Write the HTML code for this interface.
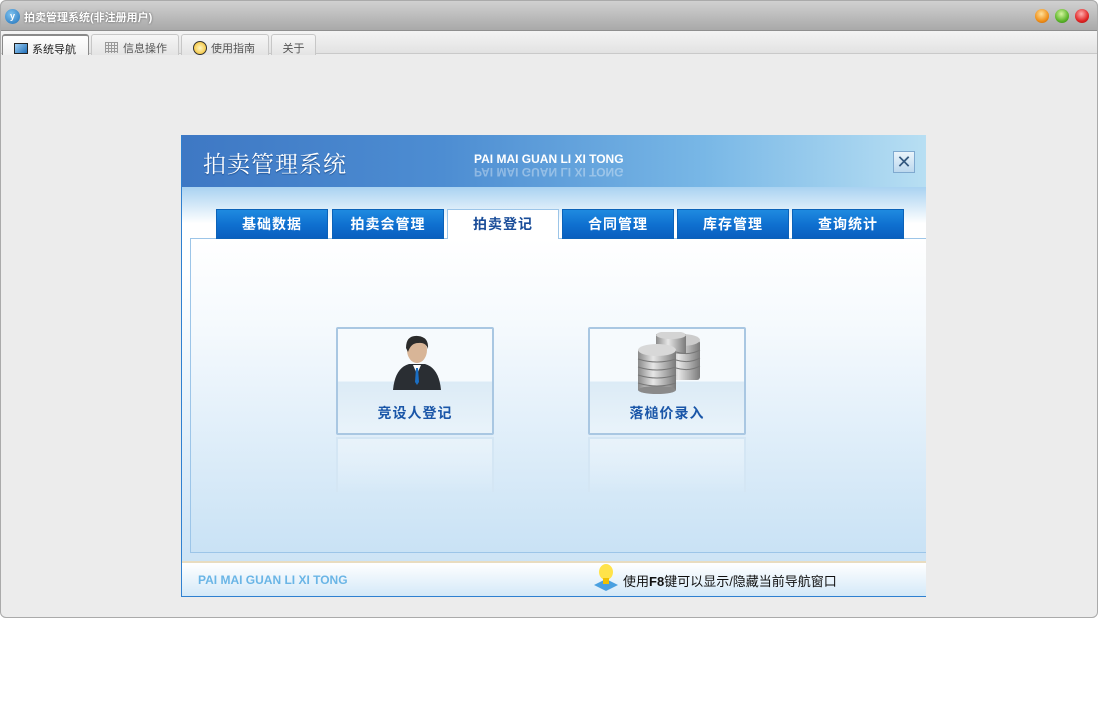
<!DOCTYPE html>
<html><head><meta charset="utf-8"><style>
*{margin:0;padding:0;box-sizing:border-box}
body{width:1098px;height:712px;background:#fff;font-family:"Liberation Sans","Noto Sans CJK SC",sans-serif;position:relative;overflow:hidden}
.win{position:absolute;left:0;top:0;width:1098px;height:618px;background:#ececec;border-radius:6px;overflow:hidden}
.wb{position:absolute;left:0;top:0;width:1098px;height:618px;border:1px solid #aaa;border-radius:6px;z-index:5}
.title{position:absolute;left:0;top:0;width:100%;height:31px;background:linear-gradient(#d2d2d2,#a9a9a9);border-bottom:1px solid #8f8f8f}
.title span{position:absolute;left:24px;top:9px;color:#fff;font-size:11px;font-weight:bold;text-shadow:0 0 2px #555}
.dot{position:absolute;top:9px;width:14px;height:14px;border-radius:50%}
.tabs{position:absolute;left:0;top:31px;width:100%;height:23px;background:linear-gradient(#f4f4f4,#e2e2e2);border-bottom:1px solid #c9c9c9}
.t{position:absolute;top:3px;height:21px;border:1px solid #c7c7c7;border-bottom:none;border-radius:3px 3px 0 0;background:linear-gradient(#f6f6f6,#e4e4e4);font-size:11px;color:#555;padding:5px 0 0 0}
.panel{position:absolute;left:181px;top:135px;width:745px;height:462px;border-left:1px solid #2f80d0;border-bottom:1px solid #2f80d0;background:linear-gradient(#fff 0%,#fff 30%,#c7e0f4 100%);overflow:hidden}
.hdr{position:absolute;left:0;top:0;width:745px;height:52px;background:linear-gradient(90deg,#3e78c4 0%,#4d8dd2 35%,#78b7e6 70%,#b8dff3 100%)}
.band{position:absolute;left:0;top:52px;width:745px;height:52px;background:linear-gradient(#a9d2f1,#fff 70%)}
.bt{position:absolute;top:74px;width:112px;height:30px;background:linear-gradient(#1f8ae0,#0e6fcf 55%,#0a5fbf);border:1px solid #0b62b8;color:#fff;font-size:14px;font-weight:bold;text-align:center;line-height:29px;letter-spacing:1px}
.bt.a{background:#fff;color:#1a4d99;border-color:#9cc5e8;border-bottom:none;height:30px}
.box{position:absolute;left:8px;top:103px;width:737px;height:315px;border:1px solid #9cc5e8;border-right:none;background:linear-gradient(#fff 0%,#f4f9fd 30%,#c9e2f5 100%)}
.card{position:absolute;width:158px;height:108px;border:2px solid #a9c7e2;border-radius:2px;background:linear-gradient(#f6fafd 0%,#f6fafd 50%,#dcebf6 51%,#e9f3fa 100%);text-align:center}
.card .l{position:absolute;left:0;width:100%;top:74px;font-size:14px;font-weight:bold;color:#1a56a8;letter-spacing:1px}
.refl{position:absolute;width:158px;height:55px;border:2px solid #d4e6f4;border-bottom:none;background:linear-gradient(rgba(235,244,251,.8),rgba(200,225,244,0))}
.foot{position:absolute;left:0;top:426px;width:745px;height:35px;border-top:2px solid #e8dcc0;background:linear-gradient(#fff,#d4e9f8)}
</style></head><body>
<div class="win">
 <div class="title">
  <div style="position:absolute;left:5px;top:9px;width:15px;height:15px;border-radius:50%;background:radial-gradient(circle at 40% 35%,#7fc3f0,#1d6fb8);color:#fff;font-size:9px;font-weight:bold;text-align:center;line-height:15px">y</div>
  <span>拍卖管理系统(非注册用户)</span>
  <div class="dot" style="left:1035px;background:radial-gradient(circle at 45% 35%,#ffe19a,#f0901a 60%,#b85a00)"></div>
  <div class="dot" style="left:1055px;background:radial-gradient(circle at 45% 35%,#d6f5a0,#5cb52a 60%,#2f7a10)"></div>
  <div class="dot" style="left:1075px;background:radial-gradient(circle at 45% 35%,#ffb0b0,#e02525 60%,#9a0c0c)"></div>
 </div>
 <div class="tabs">
  <div class="t" style="left:2px;width:87px;background:linear-gradient(#fff,#f0f0f0);color:#222;border-color:#8a8a8a;border-width:2px 1px 0 1px"><span style="display:inline-block;width:14px;height:11px;border:1px solid #222;background:linear-gradient(135deg,#9fd0f5,#1f6eb8);vertical-align:-1px;margin:0 4px 0 11px"></span>系统导航</div>
  <div class="t" style="left:91px;width:88px"><span style="display:inline-block;width:13px;height:11px;background:repeating-linear-gradient(90deg,#999 0 1px,transparent 1px 3px),repeating-linear-gradient(#999 0 1px,transparent 1px 3px);vertical-align:-1px;margin:0 5px 0 13px"></span>信息操作</div>
  <div class="t" style="left:181px;width:88px"><span style="display:inline-block;width:14px;height:14px;border-radius:50%;border:1px solid #333;background:radial-gradient(#fff6c0,#f1b71c);vertical-align:-3px;margin:0 4px 0 11px"></span>使用指南</div>
  <div class="t" style="left:271px;width:45px;text-align:center">关于</div>
 </div>
 <div class="panel">
  <div class="hdr">
   <div style="position:absolute;left:21px;top:11px;color:#fff;font-family:'Noto Serif CJK SC',serif;font-size:23px;text-shadow:0 1px 1px #1d4f8f;letter-spacing:1px">拍卖管理系统</div>
   <div style="position:absolute;left:292px;top:17px;color:#fff;font-size:12px;font-weight:bold">PAI MAI GUAN LI XI TONG</div>
   <div style="position:absolute;left:292px;top:30px;color:rgba(255,255,255,.35);font-size:12px;font-weight:bold;transform:scaleY(-1)">PAI MAI GUAN LI XI TONG</div>
   <div style="position:absolute;left:711px;top:16px;width:22px;height:22px;border:1px solid #7fa9cf;background:linear-gradient(#eaf4fb,#bcd8ee);color:#34597f;font-size:18px;text-align:center;line-height:20px">✕</div>
  </div>
  <div class="band"></div>
  <div class="box"></div>
  <div class="bt" style="left:34px">基础数据</div>
  <div class="bt" style="left:150px">拍卖会管理</div>
  <div class="bt a" style="left:265px">拍卖登记</div>
  <div class="bt" style="left:380px">合同管理</div>
  <div class="bt" style="left:495px">库存管理</div>
  <div class="bt" style="left:610px">查询统计</div>
  <div class="card" style="left:154px;top:192px">
   <svg width="60" height="60" viewBox="0 0 60 60" style="position:absolute;left:49px;top:3px">
    <path d="M6 58 Q8 36 22 32 L38 32 Q52 36 54 58 Z" fill="#2a2e33"/>
    <path d="M26 33 L30 42 L34 33 Z" fill="#fff"/>
    <path d="M29 36 L31 36 L32 50 L30 53 L28 50 Z" fill="#1b6fc4"/>
    <ellipse cx="30" cy="18" rx="10" ry="13" fill="#d8b597"/>
    <path d="M19 16 Q19 3 31 4 Q42 5 41 17 Q39 10 31 11 Q24 11 21 20 Z" fill="#2b2b2b"/>
   </svg>
   <div class="l">竞设人登记</div>
  </div>
  <div class="refl" style="left:154px;top:302px"></div>
  <div class="card" style="left:406px;top:192px">
   <svg width="70" height="62" viewBox="0 0 70 62" style="position:absolute;left:44px;top:3px">
    <defs><linearGradient id="g" x1="0" x2="1"><stop offset="0" stop-color="#8a8a8a"/><stop offset=".4" stop-color="#e6e6e6"/><stop offset="1" stop-color="#7a7a7a"/></linearGradient></defs>
    <rect x="30" y="8" width="36" height="40" rx="3" fill="url(#g)"/>
    <ellipse cx="48" cy="8" rx="18" ry="6" fill="#ccc"/>
    <rect x="22" y="2" width="30" height="20" fill="url(#g)"/>
    <ellipse cx="37" cy="3" rx="15" ry="4" fill="#d4d4d4"/>
    <rect x="4" y="18" width="38" height="40" fill="url(#g)"/>
    <ellipse cx="23" cy="18" rx="19" ry="6" fill="#d8d8d8"/>
    <ellipse cx="23" cy="58" rx="19" ry="4" fill="#8a8a8a"/>
    <g stroke="#777" stroke-width="1" fill="none"><path d="M4 27 Q23 33 42 27M4 35 Q23 41 42 35M4 43 Q23 49 42 43M4 51 Q23 57 42 51M42 20 Q55 24 66 18M42 28 Q55 32 66 26M42 36 Q55 40 66 34"/></g>
   </svg>
   <div class="l">落槌价录入</div>
  </div>
  <div class="refl" style="left:406px;top:302px"></div>
  <div class="foot">
   <div style="position:absolute;left:16px;top:10px;color:#6ab5e6;font-size:12px;font-weight:bold">PAI MAI GUAN LI XI TONG</div>
   <svg width="28" height="30" viewBox="0 0 28 30" style="position:absolute;left:410px;top:0px"><path d="M2 22 L14 16 L26 22 L14 28 Z" fill="#4aa0e0"/><ellipse cx="14" cy="9" rx="7" ry="8" fill="#ffe34a"/><rect x="11" y="15" width="6" height="6" fill="#f0c000"/></svg>
   <div style="position:absolute;left:441px;top:8px;font-size:13px;color:#111">使用<b>F8</b>键可以显示/隐藏当前导航窗口</div>
  </div>
 </div>
</div>
<div class="wb"></div>
</body></html>
